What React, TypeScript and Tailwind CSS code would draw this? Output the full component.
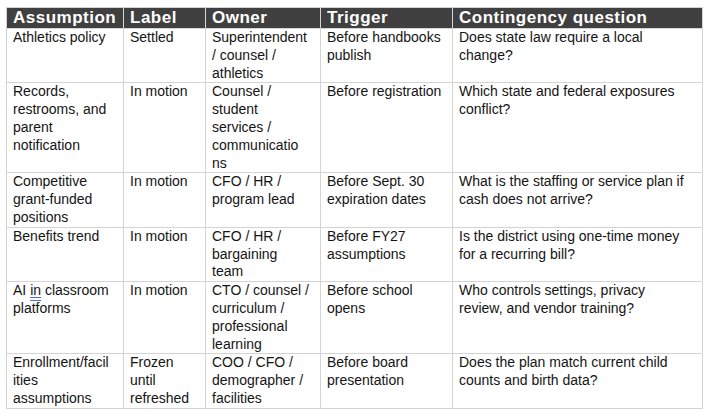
import React from "react";

type Line = React.ReactNode;

const headers = ["Assumption", "Label", "Owner", "Trigger", "Contingency question"];
const widths = ["w-[117px]", "w-[82px]", "w-[115px]", "w-[132px]", "w-[250px]"];

const rows: Line[][][] = [
  [
    ["Athletics policy"],
    ["Settled"],
    ["Superintendent", "/ counsel /", "athletics"],
    ["Before handbooks", "publish"],
    ["Does state law require a local", "change?"],
  ],
  [
    ["Records,", "restrooms, and", "parent", "notification"],
    ["In motion"],
    ["Counsel /", "student", "services /", "communicatio", "ns"],
    ["Before registration"],
    ["Which state and federal exposures", "conflict?"],
  ],
  [
    ["Competitive", "grant-funded", "positions"],
    ["In motion"],
    ["CFO / HR /", "program lead"],
    ["Before Sept. 30", "expiration dates"],
    ["What is the staffing or service plan if", "cash does not arrive?"],
  ],
  [
    ["Benefits trend"],
    ["In motion"],
    ["CFO / HR /", "bargaining", "team"],
    ["Before FY27", "assumptions"],
    ["Is the district using one-time money", "for a recurring bill?"],
  ],
  [
    [
      <>
        AI <span className="underline decoration-double decoration-[#4a6fd6] underline-offset-2">in</span> classroom
      </>,
      "platforms",
    ],
    ["In motion"],
    ["CTO / counsel /", "curriculum /", "professional", "learning"],
    ["Before school", "opens"],
    ["Who controls settings, privacy", "review, and vendor training?"],
  ],
  [
    ["Enrollment/facil", "ities", "assumptions"],
    ["Frozen", "until", "refreshed"],
    ["COO / CFO /", "demographer /", "facilities"],
    ["Before board", "presentation"],
    ["Does the plan match current child", "counts and birth data?"],
  ],
];

export default function App() {
  return (
    <div className="w-[706px] h-[412px] bg-white pl-[6px] pt-[7px] font-['Liberation_Sans',Arial,sans-serif] text-[#141414]">
      <table className="table-fixed border-collapse w-[696px]">
        <colgroup>
          {widths.map((w, i) => (
            <col key={i} className={w} />
          ))}
        </colgroup>
        <thead>
          <tr>
            {headers.map((h) => (
              <th
                key={h}
                className="bg-[#404040] text-white text-left font-bold text-[17px] tracking-[0.5px] leading-[20px] px-[6px] p-0 border border-[#d4d4d4] align-middle"
              >
                {h}
              </th>
            ))}
          </tr>
        </thead>
        <tbody>
          {rows.map((row, ri) => (
            <tr key={ri}>
              {row.map((cell, ci) => (
                <td
                  key={ci}
                  className="border border-[#d4d4d4] align-top px-[6px] py-0 text-[14px] leading-[17.8px]"
                >
                  {cell.map((line, li) => (
                    <div key={li} className="whitespace-nowrap">
                      {line}
                    </div>
                  ))}
                </td>
              ))}
            </tr>
          ))}
        </tbody>
      </table>
    </div>
  );
}
